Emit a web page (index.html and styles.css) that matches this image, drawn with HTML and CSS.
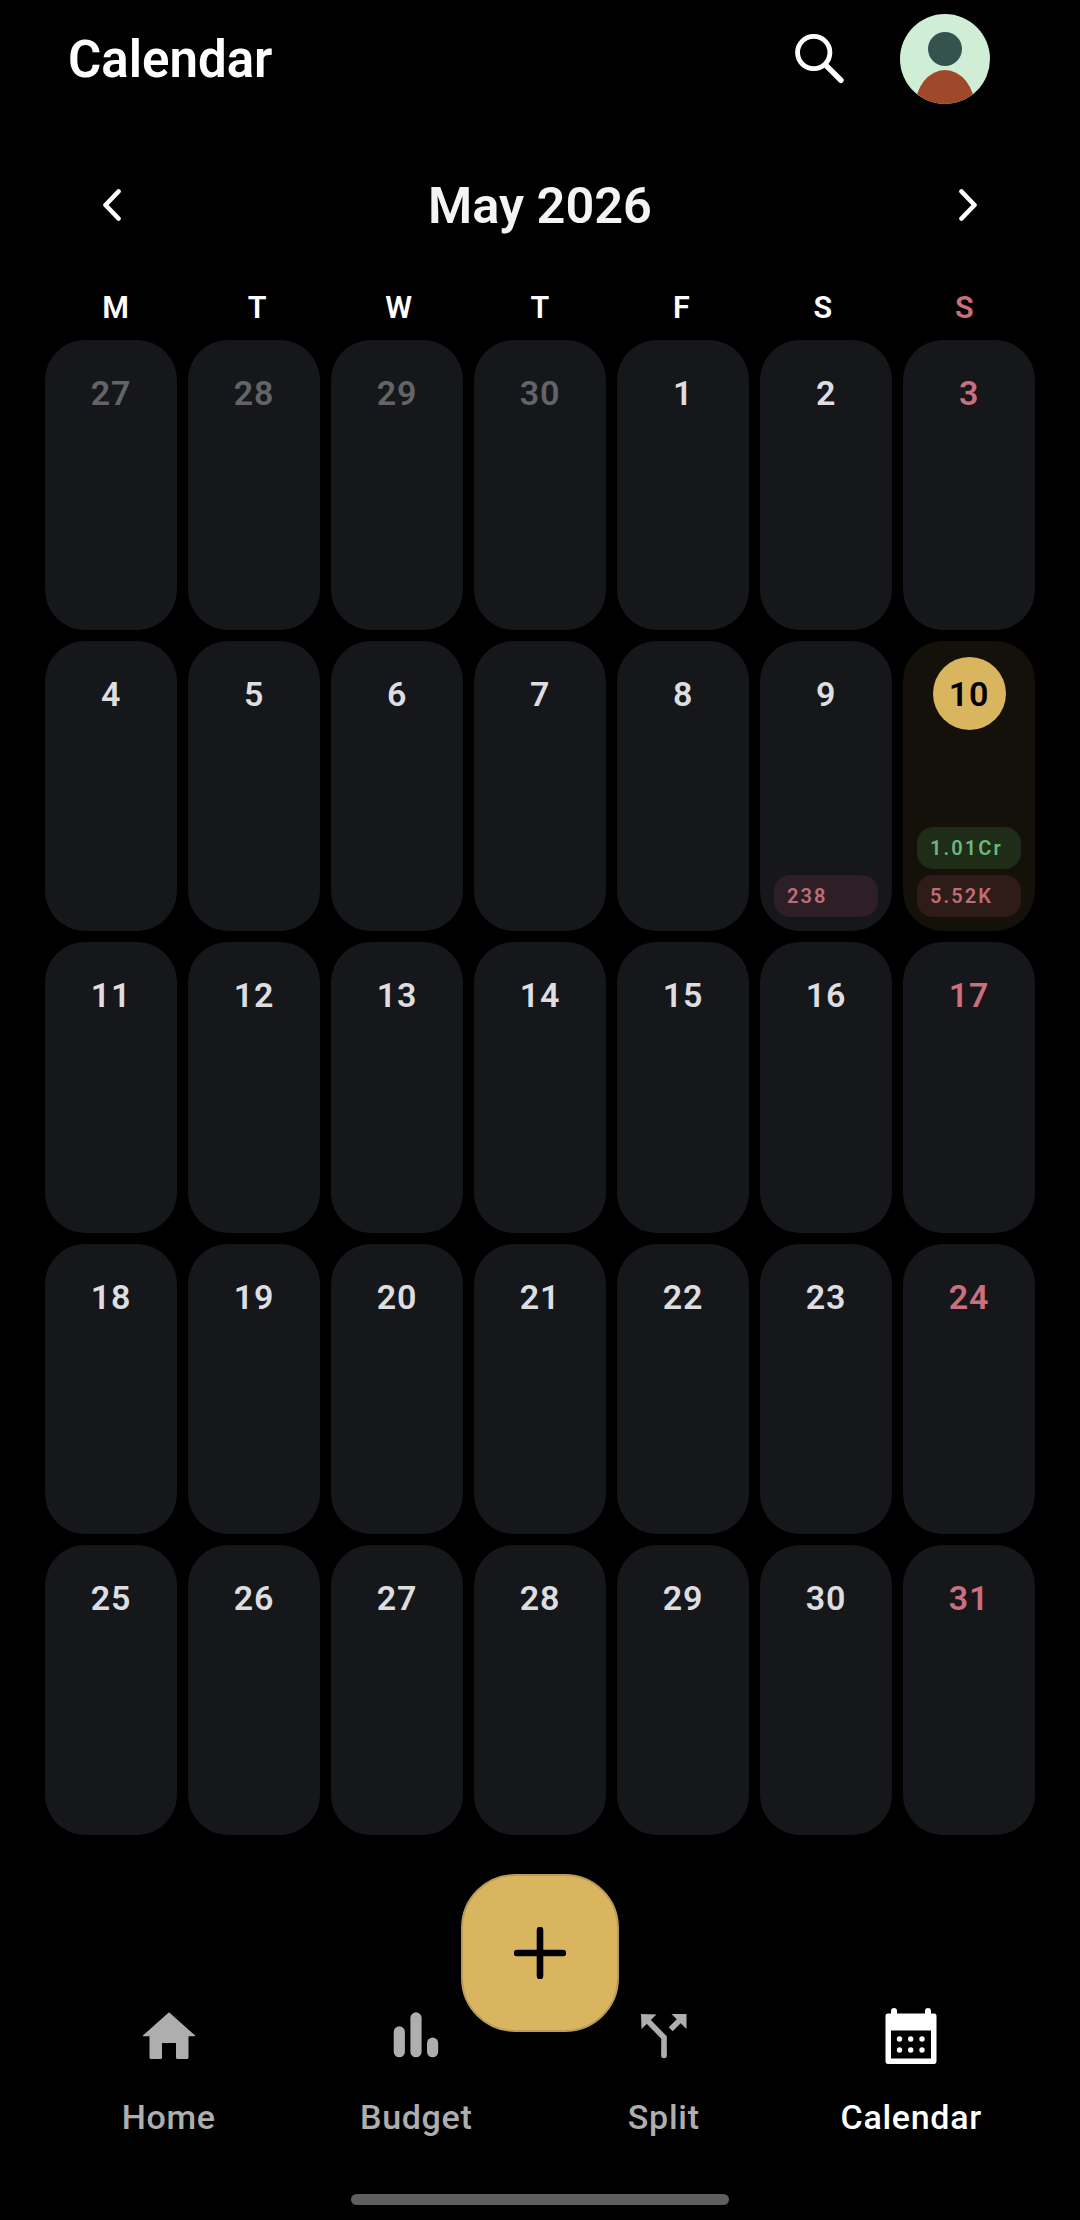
FILE: index.html
```html
<!DOCTYPE html>
<html lang="en">
<head>
<meta charset="utf-8">
<title>Calendar</title>
<link rel="stylesheet" href="styles.css">
</head>
<body>
<div class="page">
  <header class="topbar">
    <h1 class="title">Calendar</h1>
    <svg class="search" viewBox="0 0 60 60"><circle cx="24.3" cy="22.3" r="14.7" fill="none" stroke="#fff" stroke-width="4.4"/><path d="M35 33.5 L49 47.5" stroke="#fff" stroke-width="5" stroke-linecap="round"/></svg>
    <svg class="avatar" viewBox="0 0 90 90"><defs><clipPath id="av"><circle cx="45" cy="45" r="45"/></clipPath></defs><g clip-path="url(#av)"><rect width="90" height="90" fill="#cfeed5"/><circle cx="45" cy="35" r="17" fill="#35524f"/><ellipse cx="45" cy="94" rx="30" ry="38" fill="#a0492a"/></g></svg>
  </header>

  <div class="monthbar">
    <svg class="chev" viewBox="0 0 20 32"><path d="M16.5 2.5 L3.5 16 L16.5 29.5" fill="none" stroke="#fff" stroke-width="4.6" stroke-linecap="round" stroke-linejoin="round"/></svg>
    <div class="month">May 2026</div>
    <svg class="chev" viewBox="0 0 20 32"><path d="M3.5 2.5 L16.5 16 L3.5 29.5" fill="none" stroke="#fff" stroke-width="4.6" stroke-linecap="round" stroke-linejoin="round"/></svg>
  </div>

  <div class="weekdays">
    <span>M</span><span>T</span><span>W</span><span>T</span><span>F</span><span>S</span><span class="sun">S</span>
  </div>

  <div class="grid">
    <div class="cell"><div class="num muted">27</div></div>
    <div class="cell"><div class="num muted">28</div></div>
    <div class="cell"><div class="num muted">29</div></div>
    <div class="cell"><div class="num muted">30</div></div>
    <div class="cell"><div class="num">1</div></div>
    <div class="cell"><div class="num">2</div></div>
    <div class="cell"><div class="num sun">3</div></div>

    <div class="cell"><div class="num">4</div></div>
    <div class="cell"><div class="num">5</div></div>
    <div class="cell"><div class="num">6</div></div>
    <div class="cell"><div class="num">7</div></div>
    <div class="cell"><div class="num">8</div></div>
    <div class="cell"><div class="num">9</div><div class="chip red">238</div></div>
    <div class="cell today"><div class="num"><span class="disc">10</span></div><div class="chip green first">1.01Cr</div><div class="chip red">5.52K</div></div>

    <div class="cell"><div class="num">11</div></div>
    <div class="cell"><div class="num">12</div></div>
    <div class="cell"><div class="num">13</div></div>
    <div class="cell"><div class="num">14</div></div>
    <div class="cell"><div class="num">15</div></div>
    <div class="cell"><div class="num">16</div></div>
    <div class="cell"><div class="num sun">17</div></div>

    <div class="cell"><div class="num">18</div></div>
    <div class="cell"><div class="num">19</div></div>
    <div class="cell"><div class="num">20</div></div>
    <div class="cell"><div class="num">21</div></div>
    <div class="cell"><div class="num">22</div></div>
    <div class="cell"><div class="num">23</div></div>
    <div class="cell"><div class="num sun">24</div></div>

    <div class="cell"><div class="num">25</div></div>
    <div class="cell"><div class="num">26</div></div>
    <div class="cell"><div class="num">27</div></div>
    <div class="cell"><div class="num">28</div></div>
    <div class="cell"><div class="num">29</div></div>
    <div class="cell"><div class="num">30</div></div>
    <div class="cell"><div class="num sun">31</div></div>
  </div>

  <nav class="nav">
    <div class="tab">
      <svg class="ico" viewBox="0 0 68 68"><path d="M34 4.3 L7.8 27.6 Q7.8 28.3 8.5 28.3 L14.5 28.3 L14.5 49.5 Q14.5 51 16 51 L25.3 51 Q27 51 27 49.5 L27 35 L41 35 L41 49.5 Q41 51 42.7 51 L52 51 Q53.5 51 53.5 49.5 L53.5 28.3 L59.5 28.3 Q60.2 28.3 60.2 27.6 Z" fill="#aeaeae"/></svg>
      <span class="lbl">Home</span>
    </div>
    <div class="tab">
      <svg class="ico" viewBox="0 0 68 68"><rect x="11.7" y="18.3" width="11.2" height="31" rx="5.6" fill="#aeaeae"/><rect x="28.4" y="4.3" width="11.2" height="45" rx="5.6" fill="#aeaeae"/><rect x="45" y="29.6" width="11.2" height="19.7" rx="5.6" fill="#aeaeae"/></svg>
      <span class="lbl">Budget</span>
    </div>
    <div class="tab">
      <svg class="ico" viewBox="0 0 68 68"><path d="M16 11 L34 29.5 L34 47" fill="none" stroke="#aeaeae" stroke-width="5.6" stroke-linejoin="miter"/><path d="M34 47 L34 47.5" stroke="#aeaeae" stroke-width="5.6" stroke-linecap="round"/><path d="M52 10 L40.7 21.3" stroke="#aeaeae" stroke-width="5.6"/><path d="M11 6 L26.5 6.5 L11.5 21 Z M56.5 6 L41.5 6 L56.5 21 Z" fill="#aeaeae"/></svg>
      <span class="lbl">Split</span>
    </div>
    <div class="tab active">
      <svg class="ico" viewBox="0 0 68 68"><g transform="translate(0 -4)"><path d="M17 4 Q20 4 20 7 L20 9.5 L48 9.5 L48 7 Q48 4 51 4 Q54 4 54 7 L54 9.5 L57 9.5 Q59.5 9.5 59.5 12 L59.5 57 Q59.5 60 57 60 L11 60 Q8.5 60 8.5 57 L8.5 12 Q8.5 9.5 11 9.5 L14 9.5 L14 7 Q14 4 17 4 Z" fill="#fff"/><rect x="14" y="26.5" width="40" height="28" fill="#000"/><g fill="#fff"><circle cx="22.5" cy="35" r="2.7"/><circle cx="33.7" cy="35" r="2.7"/><circle cx="45" cy="35" r="2.7"/><circle cx="22.5" cy="46" r="2.7"/><circle cx="33.7" cy="46" r="2.7"/><circle cx="45" cy="46" r="2.7"/></g></g></svg>
      <span class="lbl">Calendar</span>
    </div>
  </nav>

  <button class="fab" aria-label="Add"><svg viewBox="0 0 52 52"><path d="M26 3 L26 49 M3 26 L49 26" stroke="#000" stroke-width="6.6" stroke-linecap="round"/></svg></button>
  <div class="homebar"></div>
</div>
</body>
</html>
```
FILE: styles.css
```css
* { box-sizing: border-box; }
html, body { margin: 0; padding: 0; background: #000; }
body { font-family: Roboto, "Noto Sans", sans-serif; color: #fff; }
.page { position: relative; width: 1080px; height: 2220px; overflow: hidden; background: #000; display: flex; flex-direction: column; padding-top: 14px; }

.topbar { display: flex; align-items: center; height: 90px; padding: 0 45px 0 68px; }
.title { margin: 1px 0 0; flex: 1; font-size: 51px; line-height: 90px; font-weight: 600; color: #fff; }
.search { width: 66px; height: 66px; margin-right: 47px; margin-top: 4px; }
.avatar { width: 90px; height: 90px; margin-right: 45px; }

.monthbar { display: flex; align-items: center; justify-content: space-between; height: 60px; margin-top: 71px; padding: 0 102px; }
.chev { width: 20px; height: 32px; }
.month { padding-top: 2px; font-size: 50.5px; line-height: 60px; font-weight: 600; color: #f4f4f4; }

.weekdays { display: grid; grid-template-columns: repeat(7, 1fr); margin: 56px 45px 0; height: 34px; font-size: 30.5px; line-height: 34px; font-weight: 600; text-align: center; color: #fff; }
.weekdays .sun { color: #c96f7d; }

.grid { display: grid; grid-template-columns: repeat(7, 132px); grid-auto-rows: 290.2px; gap: 11px; margin: 15px 45px 0; }
.cell { display: flex; flex-direction: column; background: #16171b; border-radius: 40px; padding: 16px 14px 14px; }
.cell.today { background: #14100a; }
.num { height: 73px; margin-bottom: auto; font-size: 34px; line-height: 74px; font-weight: 600; letter-spacing: .8px; text-align: center; color: #dedee0; }
.num.muted { color: #636467; }
.num.sun { color: #c96f7d; }
.disc { display: block; width: 73px; height: 73px; margin: 0 auto; border-radius: 50%; background: #dab55f; color: #000; }

.chip { height: 42px; border-radius: 16px; padding-left: 13px; font-size: 20px; line-height: 42px; font-weight: 600; letter-spacing: 2.1px; }
.chip.first { margin-bottom: 6px; }
.chip.red { color: #bf6c7a; background: #2d1f25; }
.today .chip.red { background: #2e1c18; }
.chip.green { color: #6bb878; background: #1f2c18; }

.nav { position: absolute; left: 45px; top: 2008px; display: grid; grid-template-columns: repeat(4, 247.5px); }
.tab { display: flex; flex-direction: column; align-items: center; color: #aeaeae; }
.tab.active { color: #fff; }
.ico { width: 68px; height: 68px; }
.lbl { margin-top: 16px; font-size: 34px; line-height: 50px; font-weight: 500; letter-spacing: .7px; }

.fab { position: absolute; left: 461px; top: 1874px; width: 158px; height: 158px; padding: 0; border: 2.5px solid #b89c58; border-radius: 54px; background: #dab55f; display: flex; align-items: center; justify-content: center; }
.fab svg { width: 52px; height: 52px; display: block; }

.homebar { position: absolute; left: 351px; top: 2194px; width: 378px; height: 11px; border-radius: 6px; background: #5f5f5f; }
```
